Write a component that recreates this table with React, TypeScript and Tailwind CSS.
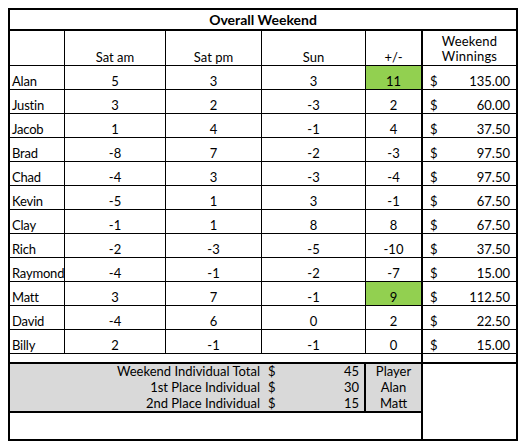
const rows = [
  { name: "Alan", am: 5, pm: 3, sun: 3, diff: 11, win: "135.00", top: true },
  { name: "Justin", am: 3, pm: 2, sun: -3, diff: 2, win: "60.00" },
  { name: "Jacob", am: 1, pm: 4, sun: -1, diff: 4, win: "37.50" },
  { name: "Brad", am: -8, pm: 7, sun: -2, diff: -3, win: "97.50" },
  { name: "Chad", am: -4, pm: 3, sun: -3, diff: -4, win: "97.50" },
  { name: "Kevin", am: -5, pm: 1, sun: 3, diff: -1, win: "67.50" },
  { name: "Clay", am: -1, pm: 1, sun: 8, diff: 8, win: "67.50" },
  { name: "Rich", am: -2, pm: -3, sun: -5, diff: -10, win: "37.50" },
  { name: "Raymond", am: -4, pm: -1, sun: -2, diff: -7, win: "15.00" },
  { name: "Matt", am: 3, pm: 7, sun: -1, diff: 9, win: "112.50", top: true },
  { name: "David", am: -4, pm: 6, sun: 0, diff: 2, win: "22.50" },
  { name: "Billy", am: 2, pm: -1, sun: -1, diff: 0, win: "15.00" },
];

const summary = [
  { label: "Weekend Individual Total", amount: 45, player: "Player", h: "h-[15px]" },
  { label: "1st Place Individual", amount: 30, player: "Alan", h: "h-[16px]" },
  { label: "2nd Place Individual", amount: 15, player: "Matt", h: "h-[16px]" },
];

const fmt = (n: number) => (n < 0 ? `-${Math.abs(n)}` : `${n}`);

export default function App() {
  return (
    <div className="w-[523px] h-[446px] bg-white pt-2 pl-2 text-black text-[13px] font-['Lato',sans-serif]">
      <div className="w-[510px] border-2 border-black">
        {/* title */}
        <div className="h-[21px] border-b-2 border-black text-center font-bold text-[14px] leading-[19px]">
          Overall Weekend
        </div>

        {/* column headers */}
        <div className="flex h-[35px] border-b border-black leading-[16px]">
          <div className="w-[55px] border-r border-black" />
          <div className="w-[101px] border-r border-black flex items-end justify-center">Sat am</div>
          <div className="w-[96px] border-r border-black flex items-end justify-center">Sat pm</div>
          <div className="w-[104px] border-r border-black flex items-end justify-center">Sun</div>
          <div className="w-[57px] border-r-2 border-black flex items-end justify-center">+/-</div>
          <div className="flex-1 flex flex-col items-center justify-end leading-[15px] pb-[1px] tracking-[0.2px]">
            <span>Weekend</span>
            <span>Winnings</span>
          </div>
        </div>

        {/* players */}
        {rows.map((r) => (
          <div key={r.name} className="flex h-[24px] border-b border-black leading-[16px]">
            <div className="w-[55px] border-r border-black flex items-end pl-[2px] tracking-[-0.2px] whitespace-nowrap">
              {r.name}
            </div>
            <div className="w-[101px] border-r border-black flex items-end justify-center">{fmt(r.am)}</div>
            <div className="w-[96px] border-r border-black flex items-end justify-center">{fmt(r.pm)}</div>
            <div className="w-[104px] border-r border-black flex items-end justify-center">{fmt(r.sun)}</div>
            <div
              className={`w-[57px] border-r-2 border-black flex items-end justify-center ${
                r.top ? "bg-[#92d050]" : ""
              }`}
            >
              {fmt(r.diff)}
            </div>
            <div className="flex-1 flex items-end justify-between pl-[7px] pr-[6px]">
              <span>$</span>
              <span>{r.win}</span>
            </div>
          </div>
        ))}

        {/* spacer row */}
        <div className="flex h-[10px] border-b-2 border-black">
          <div className="w-[413px] border-r-2 border-black" />
          <div className="flex-1" />
        </div>

        {/* summary */}
        <div className="flex">
          <div className="w-[413px] border-r-2 border-black">
            <div className="flex h-[49px] border-b-2 border-black bg-[#d9d9d9] leading-[16px]">
              <div className="w-[356px] border-r-2 border-black flex flex-col">
                {summary.map((s) => (
                  <div key={s.label} className={`flex ${s.h} items-end`}>
                    <span className="w-[250px] text-right">{s.label}</span>
                    <span className="flex-1 flex justify-between pl-[8px] pr-[5px]">
                      <span>$</span>
                      <span>{s.amount}</span>
                    </span>
                  </div>
                ))}
              </div>
              <div className="flex-1 flex flex-col">
                {summary.map((s) => (
                  <div key={s.player} className={`flex ${s.h} items-end justify-center`}>
                    {s.player}
                  </div>
                ))}
              </div>
            </div>
            <div className="h-[26px]" />
          </div>
          <div className="flex-1" />
        </div>
      </div>
    </div>
  );
}
